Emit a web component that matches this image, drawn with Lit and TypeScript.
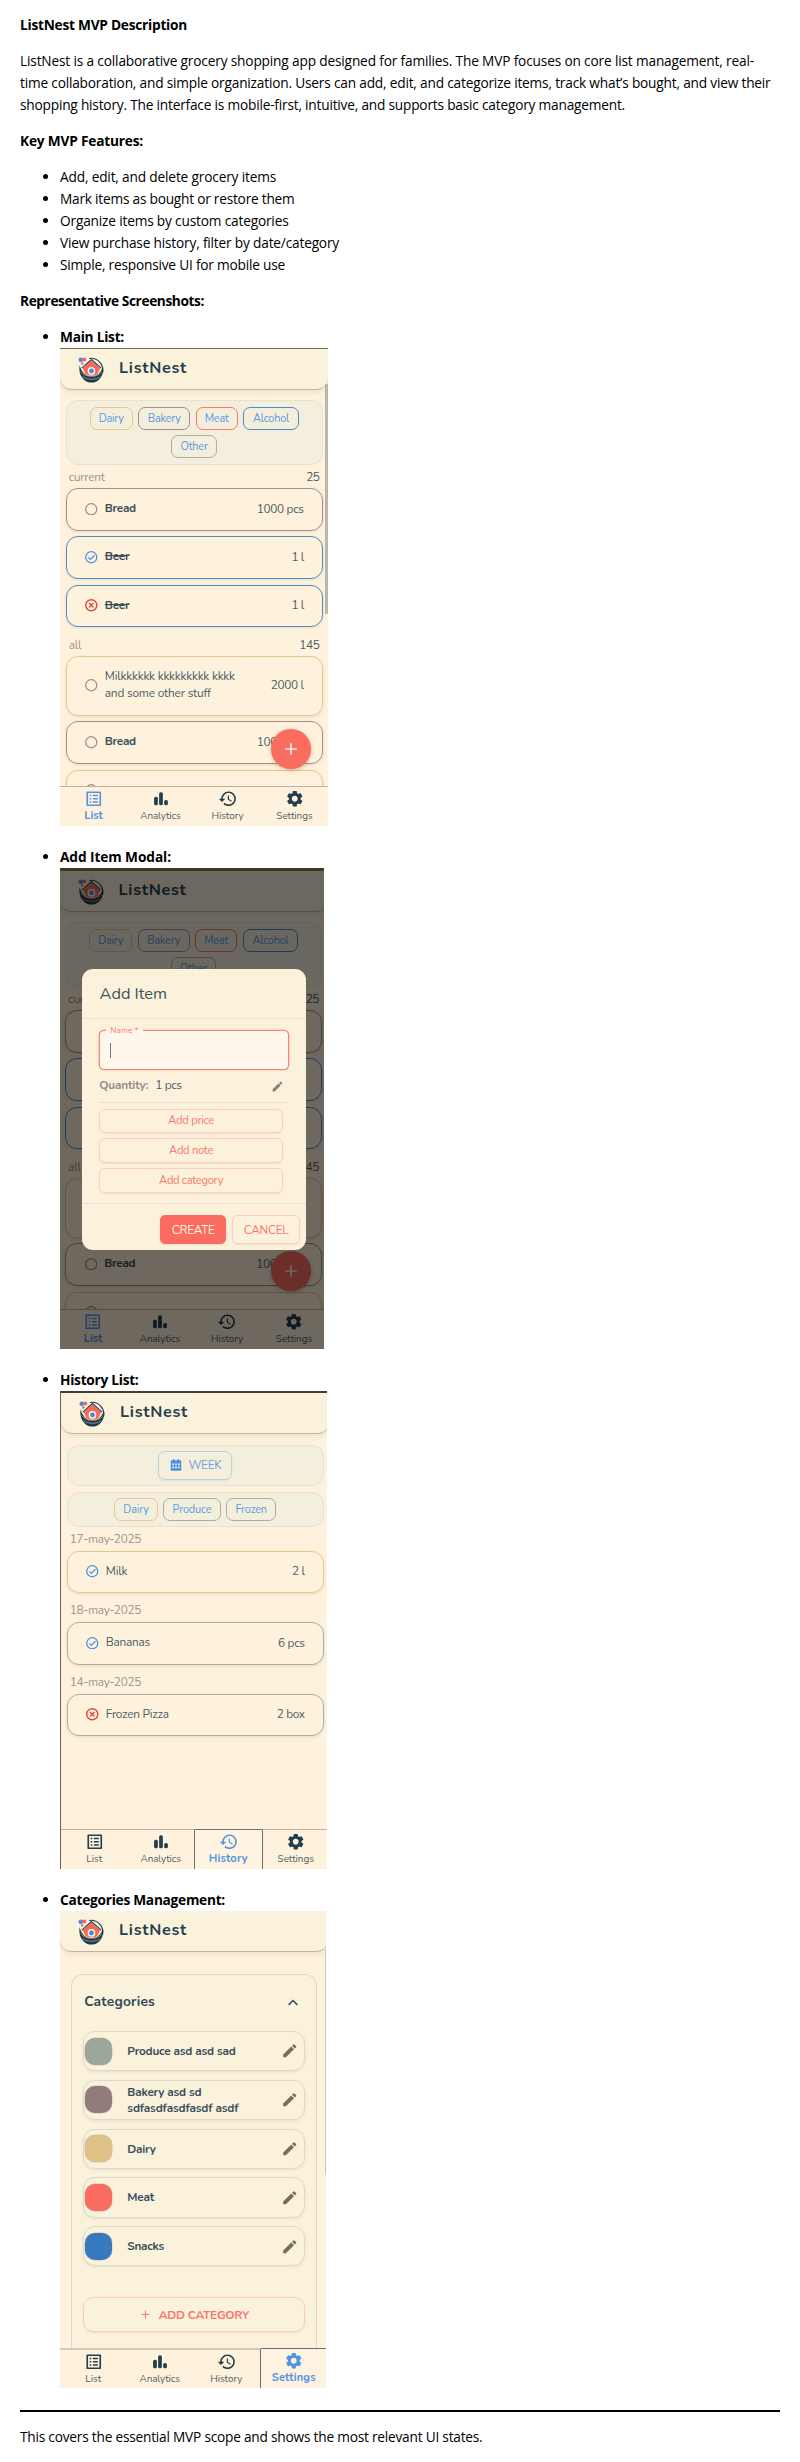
import { LitElement, html, css, svg, nothing } from "lit";
import { customElement } from "lit/decorators.js";
import { classMap } from "lit/directives/class-map.js";
import { styleMap } from "lit/directives/style-map.js";

/** A run of text with the width, in pixels, it should occupy. */
const t = (text: string, width: number, cls = "") =>
  html`<span class="t ${cls}" data-w=${width}>${text}</span>`;

const ICONS: Record<string, unknown> = {
  List: svg`<path d="M19 5v14H5V5h14m1.1-2H3.9c-.5 0-.9.4-.9.9v16.2c0 .4.4.9.9.9h16.2c.4 0 .9-.5.9-.9V3.9c0-.5-.5-.9-.9-.9zM11 7h6v2h-6V7zm0 4h6v2h-6v-2zm0 4h6v2h-6zM7 7h2v2H7zm0 4h2v2H7zm0 4h2v2H7z"/>`,
  Analytics: svg`<rect x="3.8" y="9.5" width="4.6" height="10.5" rx="2"/><rect x="10" y="4" width="4.6" height="16" rx="2"/><rect x="16.2" y="13.5" width="4.6" height="6.5" rx="2"/>`,
  History: svg`<path d="M13 3c-4.97 0-9 4.03-9 9H1l3.89 3.89.07.14L9 12H6c0-3.87 3.13-7 7-7s7 3.13 7 7-3.13 7-7 7c-1.93 0-3.68-.79-4.94-2.06l-1.42 1.42C8.27 19.99 10.51 21 13 21c4.97 0 9-4.03 9-9s-4.03-9-9-9zm-1 5v5l4.28 2.54.72-1.21-3.5-2.08V8H12z"/>`,
  Settings: svg`<path d="M19.14 12.94c.04-.3.06-.61.06-.94 0-.32-.02-.64-.07-.94l2.03-1.58c.18-.14.23-.41.12-.61l-1.92-3.32c-.12-.22-.37-.29-.59-.22l-2.39.96c-.5-.38-1.03-.7-1.62-.94l-.36-2.54c-.04-.24-.24-.41-.48-.41h-3.84c-.24 0-.43.17-.47.41l-.36 2.54c-.59.24-1.13.57-1.62.94l-2.39-.96c-.22-.08-.47 0-.59.22L2.74 8.87c-.12.21-.08.47.12.61l2.03 1.58c-.05.3-.09.63-.09.94s.02.64.07.94l-2.03 1.58c-.18.14-.23.41-.12.61l1.92 3.32c.12.22.37.29.59.22l2.39-.96c.5.38 1.03.7 1.62.94l.36 2.54c.05.24.24.41.48.41h3.84c.24 0 .44-.17.47-.41l.36-2.54c.59-.24 1.13-.56 1.62-.94l2.39.96c.22.08.47 0 .59-.22l1.92-3.32c.12-.22.07-.47-.12-.61l-2.01-1.58zM12 15.6c-1.98 0-3.6-1.62-3.6-3.6s1.62-3.6 3.6-3.6 3.6 1.62 3.6 3.6-1.62 3.6-3.6 3.6z"/>`,
  edit: svg`<path d="M3 17.25V21h3.75L17.81 9.94l-3.75-3.75L3 17.25zM20.71 7.04c.39-.39.39-1.02 0-1.41l-2.34-2.34a.9959.9959 0 0 0-1.41 0l-1.83 1.83 3.75 3.75 1.83-1.83z"/>`,
  add: svg`<path d="M19 13h-6v6h-2v-6H5v-2h6V5h2v6h6v2z"/>`,
  up: svg`<path d="M6.2 15.6 12 9.800l5.800 5.800L19.400 14 12 6.600 4.600 14z"/>`,
  calendar: svg`<path fill-rule="evenodd" d="M7 1.5h2V4h6V1.5h2V4h2.5A1.5 1.5 0 0 1 21 5.5V20.5A1.5 1.5 0 0 1 19.5 22H4.5A1.5 1.5 0 0 1 3 20.5V5.5A1.5 1.5 0 0 1 4.5 4H7zM5.5 9.500v3h3.200v-3zm4.900 0v3h3.200v-3zm4.900 0v3h3.200v-3zM5.500 14.500v3h3.200v-3zm4.900 0v3h3.200v-3zm4.900 0v3h3.200v-3z"/>`,
  open: svg`<circle cx="12" cy="12" r="10.6" fill="none" stroke="currentColor" stroke-width="2.4"/>`,
  done: svg`<circle cx="12" cy="12" r="10.6" fill="none" stroke="currentColor" stroke-width="2.4"/><path d="M6.600 12.300l3.800 3.800 7.800-8" fill="none" stroke="currentColor" stroke-width="2.4"/>`,
  gone: svg`<circle cx="12" cy="12" r="10.6" fill="none" stroke="currentColor" stroke-width="2.6"/><path d="M7.800 7.800l8.400 8.400M16.200 7.800l-8.400 8.400" fill="none" stroke="currentColor" stroke-width="2.6"/>`,
};

const icon = (name: string, cls: string) =>
  html`<svg class="icon ${cls}" viewBox="0 0 24 24" fill="currentColor">${ICONS[name]}</svg>`;

const logo = html`<svg class="logo" viewBox="0 0 28 28">
  <path d="M12.500 2.600A12.300 12.300 0 0 1 26.500 17.500" fill="none" stroke="#27404f" stroke-width="1.100" />
  <path d="M2.800 9.500C.8 20 7.500 27.600 15 27.600S28.600 20.500 26.800 10.500C25 17.500 21 20.800 15 20.800S4.500 17 2.800 9.500z" fill="#203a49" />
  <path d="M3.800 16c4 6.200 17 7.400 22 .6M5.500 21.300c4.500 3.600 14.500 3.800 18.500.2" stroke="#cfcbbb" stroke-width=".6" fill="none" />
  <path d="M15 4.600l9 8.200-2.600 5.400c-2 2.800-10.800 2.800-12.800 0L6 12.800z" fill="#f8675a" />
  <path d="M5 12.600L15 3.700l10 8.900" stroke="#27404f" stroke-width="1.200" fill="none" />
  <circle cx="15" cy="15.500" r="4" fill="#fbf2dc" />
  <circle cx="15" cy="15.500" r="2.500" fill="#3f8be0" />
  <circle cx="4" cy="4" r="2.500" fill="#4a8fdf" />
  <circle cx="7.600" cy="3.600" r="2.100" fill="#f4695b" />
  <circle cx="5.400" cy="7.800" r="1.300" fill="#f4695b" />
</svg>`;

const header = () => html`<div class="header">${logo}${t("ListNest", 68, "brand")}</div>`;

const nav = (active: string, focused = false) => html`<div class="nav">
  ${[
    ["List", 16, 18.7],
    ["Analytics", 40.3, 40.3],
    ["History", 32, 39],
    ["Settings", 36.3, 44],
  ].map(
    ([name, w, wide]) => html`<div
      class=${classMap({ tab: true, active: name === active, focused: focused && name === active })}
    >
      ${icon(name as string, "nav-icon")}${t(name as string, (name === active ? wide : w) as number)}
    </div>`
  )}
</div>`;

const chip = (name: string, color: string, box: number, w: number) =>
  html`<div class="chip" style=${styleMap({ width: `${box}px`, borderColor: color })}>${t(name, w)}</div>`;

type Line = [string, number];
const card = (state: string, color: string, lines: Line[], qty: Line | null, cls = "") => html`<div
  class="card ${cls}"
  style=${styleMap({ borderColor: color })}
>
  ${icon(state, `mark ${state}`)}
  <div class="name">${lines.map(([s, w]) => html`<div>${t(s, w)}</div>`)}</div>
  ${qty ? t(...qty) : nothing}
</div>`;

const TAN = "#e6c88f";
const MAUVE = "#a68d8b";
const BLUE = "#4d8ccb";
const SAGE = "#a9afa2";
const RED = "#f9776b";

const listBody = () => html`
  ${header()}
  <div class="panel filters">
    ${chip("Dairy", TAN, 43.3, 25)}${chip("Bakery", MAUVE, 51.7, 32.7)}
    ${chip("Meat", RED, 42.3, 24)}${chip("Alcohol", BLUE, 55.3, 36)}
    ${chip("Other", SAGE, 45.7, 27.3)}
  </div>
  <div class="section">${t("current", 36)}${t("25", 13, "count")}</div>
  <div class="cards">
    ${card("open", MAUVE, [["Bread", 31]], ["1000 pcs", 47], "bold")}
    ${card("done", BLUE, [["Beer", 24.5]], ["1 l", 12.3], "bold struck")}
    ${card("gone", BLUE, [["Beer", 24.5]], ["1 l", 12.3], "bold struck")}
  </div>
  <div class="section later">${t("all", 12.7)}${t("145", 20, "count")}</div>
  <div class="cards last">
    ${card("open", TAN, [["Milkkkkkk kkkkkkkkk kkkk", 130], ["and some other stuff", 106]], ["2000 l", 33], "tall")}
    ${card("open", MAUVE, [["Bread", 31]], ["1000 pcs", 47], "bold")}
    ${card("open", TAN, [], null)}
  </div>
  ${nav("List")}
  <div class="fab">${icon("add", "fab-icon")}</div>
`;

const mainScreen = () => html`<div class="screen main">
  <div class="app">${listBody()}</div>
  <div class="scrollbar"></div>
</div>`;

const modalScreen = () => html`<div class="screen modal">
  <div class="app">${listBody()}</div>
  <div class="shade"></div>
  <div class="dialog">
    <div class="dialog-title">${t("Add Item", 67.3)}</div>
    <div class="dialog-body">
      <div class="field">
        <div class="label">${t("Name *", 28.3)}</div>
        <div class="caret"></div>
      </div>
      <div class="quantity">
        ${t("Quantity:", 49, "q-label")}
        <div class="q-value">${t("1 pcs", 26.3)}</div>
        ${icon("edit", "pencil small")}
      </div>
      <div class="extras">
        <div class="extra">${t("Add price", 45.7)}</div>
        <div class="extra">${t("Add note", 44)}</div>
        <div class="extra">${t("Add category", 64)}</div>
      </div>
    </div>
    <div class="actions">
      <div class="button primary">${t("CREATE", 43)}</div>
      <div class="button">${t("CANCEL", 44.7)}</div>
    </div>
  </div>
</div>`;

const historyScreen = () => html`<div class="screen history">
  <div class="app">
    ${header()}
    <div class="panel period">
      <div class="week">${icon("calendar", "cal")}${t("WEEK", 32.7)}</div>
    </div>
    <div class="panel kinds">
      ${chip("Dairy", TAN, 43.7, 25.3)}${chip("Produce", SAGE, 57.3, 38.7)}${chip("Frozen", SAGE, 50, 31.3)}
    </div>
    <div class="section">${t("17-may-2025", 71.3)}</div>
    ${card("done", TAN, [["Milk", 21.3]], ["2 l", 12.7])}
    <div class="section later">${t("18-may-2025", 71.3)}</div>
    ${card("done", SAGE, [["Bananas", 44]], ["6 pcs", 26.7])}
    <div class="section later">${t("14-may-2025", 71.3)}</div>
    ${card("gone", SAGE, [["Frozen Pizza", 63]], ["2 box", 28])}
    ${nav("History", true)}
  </div>
</div>`;

const CATEGORIES: [string, Line[]][] = [
  ["#9ba59a", [["Produce asd asd sad", 108.3]]],
  ["#937b7c", [["Bakery asd sd", 74], ["sdfasdfasdfasdf asdf", 111]]],
  ["#dfc086", [["Dairy", 28.3]]],
  ["#f96c5f", [["Meat", 26.7]]],
  ["#367abd", [["Snacks", 36.7]]],
];

const settingsScreen = () => html`<div class="screen settings">
  <div class="app">
    ${header()}
    <div class="group">
      <div class="group-title">${t("Categories", 70.7)}${icon("up", "chevron")}</div>
      <div class="rows">
        ${CATEGORIES.map(
          ([color, lines]) => html`<div class="row">
            <div class="swatch" style=${styleMap({ background: color })}></div>
            <div class="row-name">${lines.map(([s, w]) => html`<div>${t(s, w)}</div>`)}</div>
            ${icon("edit", "pencil")}
          </div>`
        )}
      </div>
      <div class="add">${icon("add", "plus")}${t("ADD CATEGORY", 90.3)}</div>
    </div>
    ${nav("Settings", true)}
  </div>
  <div class="scrollbar"></div>
</div>`;

@customElement("app-root")
export class AppRoot extends LitElement {
  static styles = css`
    :host {
      display: block;
      box-sizing: border-box;
      height: 2462px;
      padding: 14px 20px 0;
      overflow: hidden;
      background: #fff;
      color: #000;
      font: 13.7px/22px "Open Sans", "Noto Sans", sans-serif;
    }
    * { box-sizing: border-box; }
    .t { display: inline-block; white-space: nowrap; font-variant-ligatures: none; }
    p { margin: 0 0 14px; }
    b { font-weight: 700; }
    ul { margin: 0 0 14px; padding-left: 40px; }
    .shots { margin: 0; }
    .shots > li { margin-bottom: 20px; }
    .rule { height: 2px; margin: 22px 0 14px; background: #000; }
    .line { display: block; }

    .screen {
      position: relative;
      overflow: hidden;
      background: #fef2dc;
      color: #4b5d66;
      font: 11.8px/1.2 Nunito, Lato, sans-serif;
    }
    .main { width: 268px; height: 478px; border-top: 1px solid #756c5c; }
    .modal { width: 264px; height: 481px; border-top: 3px solid #3e3626; }
    .history { width: 267px; height: 478px; border-top: 2px solid #433d33; border-left: 1px solid #6b6355; }
    .settings { width: 266px; height: 477px; }
    .app { display: flex; flex-direction: column; width: 268px; height: 100%; }
    .modal .app { margin-left: -0.5px; }
    .icon { display: block; flex: none; }

    .header {
      display: flex;
      align-items: center;
      flex: none;
      height: 41px;
      padding-left: 17px;
      background: #fbf2dc;
      border-bottom: 1px solid #c3b1a8;
      border-radius: 0 0 12px 12px;
      box-shadow: 0 2px 5px rgba(120, 95, 60, 0.12);
    }
    .logo { width: 27px; height: 27px; }
    .brand { margin-left: 15px; font-size: 16.2px; font-weight: 700; color: #243f4f; }

    .panel {
      display: flex;
      flex-wrap: wrap;
      justify-content: center;
      align-content: center;
      flex: none;
      gap: 5px 5.5px;
      margin: 0 5.3px 0 5.5px;
      border: 1px solid #e8e1d0;
      border-radius: 12px;
      background: #f4efdc;
    }
    .filters { margin-top: 10.3px; height: 64.7px; padding: 0 20px; }
    .period { margin-top: 10.7px; height: 41.4px; }
    .kinds { margin-top: 5.6px; height: 35.4px; }
    .chip {
      display: flex;
      align-items: center;
      justify-content: center;
      height: 23.3px;
      border: 1px solid;
      border-radius: 7px;
      font-size: 10.9px;
      color: #5b9ae2;
    }
    .section {
      display: flex;
      align-items: center;
      justify-content: space-between;
      flex: none;
      height: 23.3px;
      padding: 0 8.7px;
      color: #a3938a;
    }
    .count { color: #4b5d66; }
    .later { margin-top: 6px; }
    .cards { display: flex; flex-direction: column; flex: none; gap: 5.9px; }
    .last { flex: 0 1 auto; min-height: 0; }
    .card {
      display: flex;
      align-items: center;
      flex: none;
      height: 42.3px;
      margin: 0 5.3px 0 5.5px;
      padding: 0 18px 1px 18.5px;
      border: 1px solid;
      border-radius: 12px;
      box-shadow: 0 1px 3px rgba(120, 95, 60, 0.16);
    }
    .tall { height: 59.3px; }
    .name { flex: 1; padding-left: 7.3px; line-height: 17.3px; }
    .bold .name { font-weight: 700; color: #3a4f5b; }
    .struck .name .t { text-decoration: line-through; }
    .mark { width: 12.5px; height: 12.5px; margin-top: 0.6px; }
    .open { color: #a08a87; }
    .done { color: #4a8fdf; }
    .gone { color: #e0463c; }

    .nav {
      position: relative;
      display: flex;
      flex: none;
      height: 40px;
      margin-top: auto;
      border-top: 1px solid #c4aea5;
      background: #fef2dc;
    }
    .tab {
      display: flex;
      flex-direction: column;
      align-items: center;
      flex: 1 1 0;
      padding-top: 2px;
      font-size: 9.9px;
      line-height: 14px;
      color: #4f616a;
    }
    .nav-icon { width: 19.5px; height: 19.5px; color: #233f4e; }
    .active, .active .nav-icon { color: #5294e2; }
    .active { font-size: 11.1px; font-weight: 700; }
    .focused { border: 1px solid #6a6f70; border-bottom: 0; border-radius: 2px 2px 0 0; margin-top: -1px; }
    .history .focused { background: #fff4e2; }
    .fab {
      position: absolute;
      left: 211px;
      top: 379.5px;
      width: 40.3px;
      height: 40.3px;
      display: grid;
      place-items: center;
      border-radius: 50%;
      background: #f96c5f;
      color: #ffeedd;
      box-shadow: 0 1px 4px rgba(120, 60, 40, 0.35);
    }
    .fab-icon { width: 20px; height: 20px; }
    .scrollbar { position: absolute; right: 0; width: 3px; top: 35px; height: 230px; background: #beb7a7; }
    .settings .scrollbar { width: 1px; top: 38px; height: 226px; background: #cdc6b8; }

    .shade { position: absolute; inset: 0; background: rgba(0, 0, 0, 0.57); }
    .dialog {
      position: absolute;
      left: 22.3px;
      top: 98px;
      width: 223.3px;
      height: 280.7px;
      display: flex;
      flex-direction: column;
      border-radius: 11px;
      background: #fcf2dc;
    }
    .dialog-title {
      height: 49.7px;
      padding: 15px 17.3px 0;
      border-bottom: 1px solid #ebe2cf;
      font-size: 16.4px;
      color: #3f5460;
    }
    .dialog-body { flex: 1; padding: 11.3px 17px 0; }
    .field {
      position: relative;
      height: 40.5px;
      border: 1px solid #f98478;
      border-radius: 5px;
      background: #fff7eb;
      box-shadow: 0 0 0 0.3px #f98478;
    }
    .label {
      position: absolute;
      left: 6px;
      top: -6px;
      padding: 0 4px;
      font-size: 8.2px;
      line-height: 11px;
      color: #f4796d;
      background: linear-gradient(#fcf2dc 50%, #fff7eb 50%);
    }
    .caret { width: 1px; height: 15.5px; margin: 12px 0 0 10px; background: #6d7478; }
    .quantity {
      display: flex;
      align-items: center;
      height: 32.2px;
      padding: 0 5px 3px 0;
      border-bottom: 1px solid #e9dfcf;
    }
    .q-label { font-weight: 700; color: #9c8b86; }
    .q-value { flex: 1; margin-left: 7px; }
    .pencil { width: 17.5px; height: 17.5px; color: #74705f; }
    .small { width: 13px; height: 13px; margin-top: 3px; color: #85827a; }
    .extras { display: flex; flex-direction: column; gap: 5.4px; padding: 6px 5.7px 0 0; }
    .extra {
      display: flex;
      align-items: center;
      justify-content: center;
      height: 24.4px;
      border: 1px solid #fbcdbf;
      border-radius: 6px;
      font-size: 11.2px;
      color: #f8796c;
      box-shadow: 0 1px 2px rgba(150, 110, 80, 0.13);
    }
    .actions {
      display: flex;
      justify-content: flex-end;
      gap: 6px;
      height: 46.5px;
      padding: 11.3px 5.5px 0;
      border-top: 1px solid #ebdfd2;
    }
    .button {
      display: flex;
      align-items: center;
      justify-content: center;
      width: 68px;
      height: 29px;
      border: 1px solid #fbcdbf;
      border-radius: 5px;
      font-size: 11.8px;
      color: #f8796c;
      box-shadow: 0 1px 2px rgba(150, 110, 80, 0.13);
    }
    .primary { width: 65.7px; background: #f96c5f; border-color: #f96c5f; color: #fff3e6; }

    .week {
      display: flex;
      align-items: center;
      justify-content: center;
      gap: 5.5px;
      width: 73.7px;
      height: 29px;
      border: 1px solid #bfd1da;
      border-radius: 7px;
      color: #6b9fdd;
      box-shadow: 0 1px 2px rgba(90, 120, 160, 0.12);
    }
    .cal { width: 14px; height: 14px; color: #4a90e2; }
    .history .section { height: 23.7px; }
    .history .later { margin-top: 5.5px; }

    .group {
      display: flex;
      flex-direction: column;
      flex: 1 1 0;
      min-height: 0;
      margin: 22px 11.3px 0;
      padding: 0 11px;
      border: 1px solid #ddd9c9;
      border-bottom: 0;
      border-radius: 12px 12px 0 0;
      background: #fbf2dc;
    }
    .group-title {
      display: flex;
      justify-content: space-between;
      align-items: center;
      height: 56px;
      padding: 0 4px 1px 1px;
      font-size: 13.8px;
      font-weight: 700;
      color: #32495a;
    }
    .chevron { width: 16px; height: 16px; margin-top: 1px; }
    .rows { display: flex; flex-direction: column; gap: 8.5px; }
    .row {
      display: flex;
      align-items: center;
      height: 40.3px;
      padding: 0 5px 0 0.5px;
      border: 1px solid #dcd8ca;
      border-radius: 12px;
      box-shadow: 0 1px 3px rgba(100, 90, 60, 0.13);
    }
    .swatch { width: 27px; height: 27px; border-radius: 10px; box-shadow: 0 0 0 0.5px #c8c6bb; }
    .row-name { flex: 1; padding-left: 15.5px; font-weight: 700; line-height: 16.3px; color: #3a4f5b; }
    .add {
      display: flex;
      align-items: center;
      justify-content: center;
      gap: 7px;
      height: 34.7px;
      margin-top: 31px;
      border: 1px solid #fbcbbd;
      border-radius: 10px;
      font-weight: 700;
      color: #f8776a;
      box-shadow: 0 1px 2px rgba(150, 110, 80, 0.13);
    }
    .plus { width: 13px; height: 13px; }
    .settings .nav { border-top: 2px solid #d9c6ba; }
    .settings .focused { margin-top: -2px; background: #fef3e0; }
  `;

  /** Spreads letters so each run of text takes its stated width. */
  private fit() {
    this.renderRoot.querySelectorAll<HTMLElement>(".t").forEach((el) => {
      el.style.letterSpacing = "0px";
      const spare = Number(el.dataset.w) - el.getBoundingClientRect().width;
      el.style.letterSpacing = `${spare / (el.textContent || " ").length}px`;
    });
  }

  firstUpdated() {
    this.fit();
    document.fonts?.ready.then(() => this.fit());
  }

  render() {
    return html`
      <p><b>${t("ListNest MVP Description", 167)}</b></p>
      <p>
        <span class="line">${t("ListNest is a collaborative grocery shopping app designed for families. The MVP focuses on core list management, real-", 734)}</span>
        <span class="line">${t("time collaboration, and simple organization. Users can add, edit, and categorize items, track what’s bought, and view their", 750.5)}</span>
        <span class="line">${t("shopping history. The interface is mobile-first, intuitive, and supports basic category management.", 605)}</span>
      </p>
      <p><b>${t("Key MVP Features:", 123)}</b></p>
      <ul>
        <li>${t("Add, edit, and delete grocery items", 216)}</li>
        <li>${t("Mark items as bought or restore them", 234.5)}</li>
        <li>${t("Organize items by custom categories", 228.5)}</li>
        <li>${t("View purchase history, filter by date/category", 279)}</li>
        <li>${t("Simple, responsive UI for mobile use", 225)}</li>
      </ul>
      <p><b>${t("Representative Screenshots:", 184)}</b></p>
      <ul class="shots">
        <li><b>${t("Main List:", 64)}</b>${mainScreen()}</li>
        <li><b>${t("Add Item Modal:", 111)}</b>${modalScreen()}</li>
        <li><b>${t("History List:", 78.5)}</b>${historyScreen()}</li>
        <li><b>${t("Categories Management:", 165)}</b>${settingsScreen()}</li>
      </ul>
      <div class="rule"></div>
      <p>${t("This covers the essential MVP scope and shows the most relevant UI states.", 462.5)}</p>
    `;
  }
}
